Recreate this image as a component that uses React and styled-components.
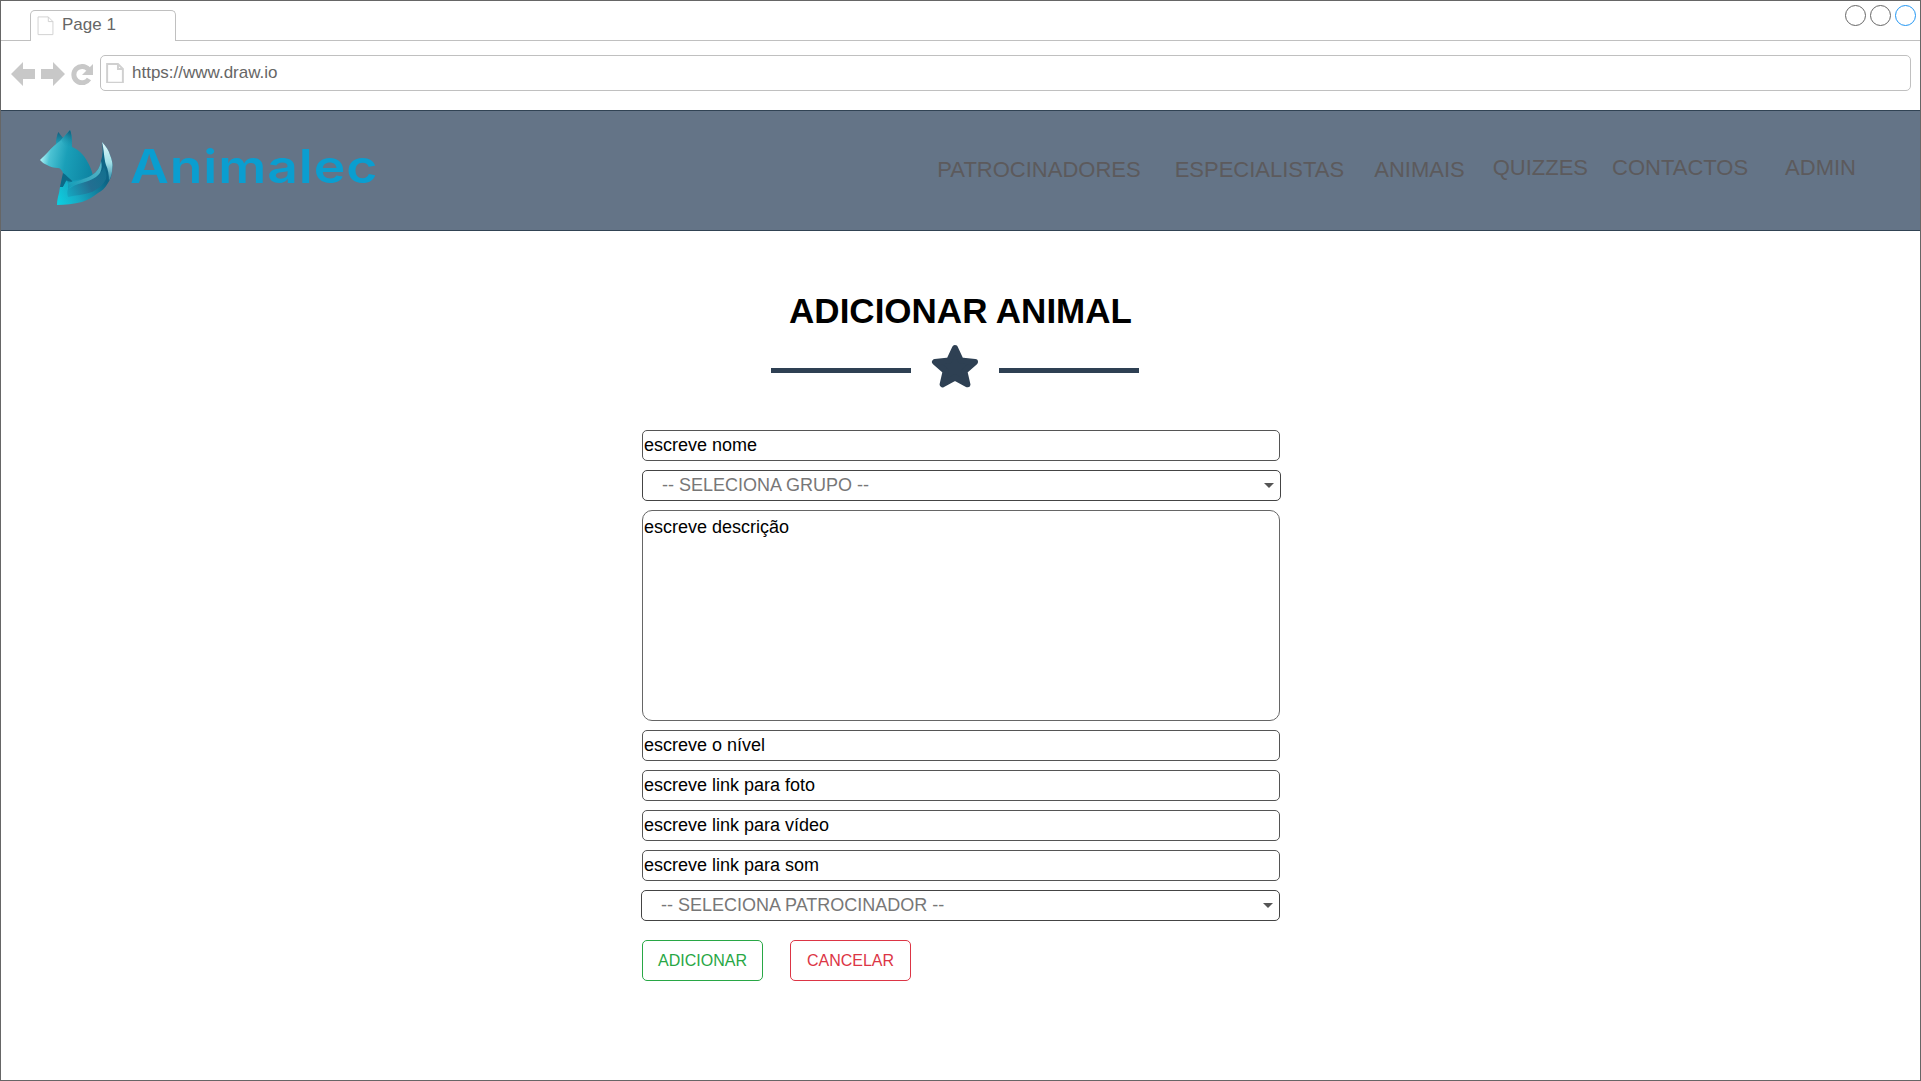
import React from 'react'
import styled, { createGlobalStyle } from 'styled-components'

const GlobalStyle = createGlobalStyle`
  html, body { margin: 0; padding: 0; background: #fff; }
  body { font-family: "Liberation Sans", Arial, sans-serif; }
  * { box-sizing: border-box; }
`

const navItems = [
  { label: 'PATROCINADORES', left: 0, lift: 0 },
  { label: 'ESPECIALISTAS', left: 34, lift: 0 },
  { label: 'ANIMAIS', left: 30, lift: 0 },
  { label: 'QUIZZES', left: 28, lift: 2 },
  { label: 'CONTACTOS', left: 24, lift: 2 },
  { label: 'ADMIN', left: 37, lift: 2 },
]

function FileIcon({ size = 20, stroke = '#d0d0d0', width = 1 }) {
  return (
    <svg width={size} height={size * 1.15} viewBox="0 0 18 21" fill="#fff" stroke={stroke} strokeWidth={width}>
      <path d="M1 1h11l5 5v14H1z" />
      <path d="M12 1v5h5" fill="none" />
    </svg>
  )
}

function BackArrow() {
  return (
    <svg width="24" height="24" viewBox="0 0 24 24" fill="#c8c8c8">
      <path d="M0 12 12 0v7h12v10H12v7z" />
    </svg>
  )
}

function ForwardArrow() {
  return (
    <svg width="24" height="24" viewBox="0 0 24 24" fill="#c8c8c8">
      <path d="M24 12 12 0v7H0v10h12v7z" />
    </svg>
  )
}

function ReloadIcon() {
  return (
    <svg width="22" height="22" viewBox="0 0 22 22" fill="none">
      <path d="M17.5 6.500A8.200 8.200 0 1 0 18 16" stroke="#c8c8c8" strokeWidth="5" />
      <path d="M22 1v11H11z" fill="#c8c8c8" />
    </svg>
  )
}

function FoxLogo() {
  return (
    <svg width="76" height="78" viewBox="0 0 76 78">
      <defs>
        <linearGradient id="foxBody" gradientUnits="userSpaceOnUse" x1="0" y1="30" x2="50" y2="40">
          <stop offset="0" stopColor="#b5f5f8" />
          <stop offset="0.18" stopColor="#4cc2d3" />
          <stop offset="0.5" stopColor="#1a9fb8" />
          <stop offset="1" stopColor="#0e86a4" />
        </linearGradient>
        <linearGradient id="foxEar" x1="0" y1="0" x2="0" y2="1">
          <stop offset="0" stopColor="#155f7e" />
          <stop offset="1" stopColor="#1b9fb9" />
        </linearGradient>
        <linearGradient id="foxEarShade" x1="0.7" y1="0" x2="0.4" y2="1">
          <stop offset="0" stopColor="#125a78" />
          <stop offset="1" stopColor="#1a9fb8" stopOpacity="0" />
        </linearGradient>
        <linearGradient id="foxTail" gradientUnits="userSpaceOnUse" x1="17" y1="76" x2="66" y2="52">
          <stop offset="0" stopColor="#0bd2e2" />
          <stop offset="0.4" stopColor="#18a9c3" />
          <stop offset="1" stopColor="#0d6485" />
        </linearGradient>
        <linearGradient id="foxBand" gradientUnits="userSpaceOnUse" x1="26" y1="64" x2="66" y2="44">
          <stop offset="0" stopColor="#14a8c2" />
          <stop offset="0.55" stopColor="#236f92" />
          <stop offset="1" stopColor="#14708f" />
        </linearGradient>
        <linearGradient id="foxStrip" gradientUnits="userSpaceOnUse" x1="28" y1="58" x2="62" y2="34">
          <stop offset="0" stopColor="#1497b3" />
          <stop offset="1" stopColor="#6fcbd8" />
        </linearGradient>
        <linearGradient id="foxTip" gradientUnits="userSpaceOnUse" x1="66" y1="54" x2="66" y2="14">
          <stop offset="0" stopColor="#1f7f9f" />
          <stop offset="0.5" stopColor="#9fdfe7" />
          <stop offset="1" stopColor="#dff8fa" />
        </linearGradient>
      </defs>
      <path d="M16 15C16 10 17 6 18.300 3L23 9L21 13Z" fill="url(#foxEar)" />
      <path d="M0 31C3 28 6 25 8 23C11 19 15 16 20 12L30 1C32 5 32 13 32 18C38 20 44 26 47 32C50 37 52 42 53 47L30 54L24 58L20 58C22 52 24 48 23 44C22 41 20 39 18 39C14 39 10 38 7 36C4 35 2 33 0 31Z" fill="url(#foxBody)" />
      <path d="M21 11L30 1C32 5 32 13 32 18L25 17Z" fill="url(#foxEarShade)" />
      <path d="M20 58C21 53 22 48 23 44C26 46 30 50 33 53L26 52L23 58Z" fill="#0b6a88" />
      <path d="M17 76C17 71 18 68 19 64L20 58L23 58L27 51L28 55L33 52C40 50 47 48 52 46C57 43 60 38 61 32C63 26 63 19 62 13C66 17 69 22 70 26C72 31 73 35 72.300 39C72 45 71 50 68 54C65 59 62 62 58 64C53 68 48 71 42 73C34 75 25 76 17 76Z" fill="url(#foxTail)" />
      <path d="M28 60C36 55 46 52 54 50C58 47 62 43 64 38C66 42 67 46 66 50C63 56 58 60 52 63C44 66 36 66 28 68C27 65 27 62 28 60Z" fill="url(#foxBand)" />
      <path d="M28 55C36 52 46 50 52 46C57 43 60 38 61 32C62 36 62 40 60 44C56 50 46 53 38 55C34 56 30 58 28 60Z" fill="url(#foxStrip)" opacity="0.8" />
      <path d="M62 13C66 17 69 22 70 26C72 31 73 35 72.300 39C72 45 71 48 69 52C69 46 68 40 66 36C64 30 64 20 62 13Z" fill="url(#foxTip)" />
    </svg>
  )
}

function StarIcon() {
  return (
    <svg width="48" height="46" viewBox="0 0 48 46">
      <path d="M24 4l5.800 12.500 14.200 1.500-10.600 9.300 3 13-12.400-6.800-12.400 6.800 3-13L4 18l14.200-1.500z" fill="#2e4053" stroke="#2e4053" strokeWidth="6" strokeLinejoin="round" />
    </svg>
  )
}

export default function App() {
  return (
    <Page>
      <GlobalStyle />
      <TabBar>
        <Tab>
          <FileIcon size={17} />
          <TabTitle>Page 1</TabTitle>
        </Tab>
        <WindowButtons>
          <WindowButton />
          <WindowButton />
          <WindowButton $active />
        </WindowButtons>
      </TabBar>
      <Toolbar>
        <ToolIcons>
          <BackArrow />
          <ForwardArrow />
          <ReloadIcon />
        </ToolIcons>
        <AddressBar>
          <FileIcon size={18} width={2} />
          <span>https://www.draw.io</span>
        </AddressBar>
      </Toolbar>
      <Header>
        <Brand>
          <FoxLogo />
          <BrandName>Animalec</BrandName>
        </Brand>
        <Nav>
          {navItems.map((item) => (
            <NavLink key={item.label} $left={item.left} $lift={item.lift}>{item.label}</NavLink>
          ))}
        </Nav>
      </Header>
      <Main>
        <Title>ADICIONAR ANIMAL</Title>
        <Divider>
          <DividerLine />
          <StarIcon />
          <DividerLine />
        </Divider>
        <Form>
          <Field>escreve nome</Field>
          <SelectField $group>
            <span>-- SELECIONA GRUPO --</span>
            <Caret />
          </SelectField>
          <TextArea>escreve descrição</TextArea>
          <Field>escreve o nível</Field>
          <Field>escreve link para foto</Field>
          <Field>escreve link para vídeo</Field>
          <Field>escreve link para som</Field>
          <SelectField $sponsor>
            <span>-- SELECIONA PATROCINADOR --</span>
            <Caret />
          </SelectField>
          <Actions>
            <ActionButton $color="#28a745">ADICIONAR</ActionButton>
            <ActionButton $color="#dc3545">CANCELAR</ActionButton>
          </Actions>
        </Form>
      </Main>
    </Page>
  )
}

const Page = styled.div`
  width: 1921px;
  height: 1081px;
  border: 1px solid #666;
  overflow: hidden;
  display: flex;
  flex-direction: column;
`
const TabBar = styled.div`
  height: 40px;
  padding-left: 29px;
  padding-right: 4px;
  border-bottom: 1px solid #c0c0c0;
  display: flex;
  align-items: flex-start;
  justify-content: space-between;
`
const Tab = styled.div`
  width: 146px;
  height: 31px;
  margin-top: 9px;
  padding-left: 6px;
  padding-top: 5px;
  display: flex;
  align-items: flex-start;
  gap: 8px;
  background: #fff;
  border: 1px solid #c0c0c0;
  border-bottom: none;
  border-radius: 5px 5px 0 0;
`
const TabTitle = styled.span`
  font-size: 17px;
  line-height: 18px;
  color: #666;
`
const WindowButtons = styled.div`
  display: flex;
  gap: 4px;
  padding-top: 4px;
`
const WindowButton = styled.div`
  width: 21px;
  height: 21px;
  border-radius: 50%;
  border: 1px solid ${(p) => (p.$active ? '#2196f3' : '#666')};
`
const Toolbar = styled.div`
  height: 69px;
  padding: 14px 9px 0 10px;
  display: flex;
  align-items: flex-start;
  gap: 7px;
`
const ToolIcons = styled.div`
  display: flex;
  align-items: center;
  gap: 6px;
  padding-top: 7px;
`
const AddressBar = styled.div`
  flex: 1;
  height: 36px;
  padding-left: 5px;
  display: flex;
  align-items: center;
  gap: 8px;
  border: 1px solid #c0c0c0;
  border-radius: 5px;
  font-size: 17px;
  color: #666;
`
const Header = styled.header`
  height: 121px;
  padding: 0 64px 0 39px;
  display: flex;
  justify-content: space-between;
  background: #647487;
  border-top: 1px solid #314354;
  border-bottom: 1px solid #314354;
`
const Brand = styled.div`
  display: flex;
  align-items: flex-start;
  gap: 14px;
  padding-top: 18px;
`
const BrandName = styled.div`
  font-family: Inter, "Liberation Sans", sans-serif;
  font-size: 46px;
  font-weight: 600;
  line-height: 56px;
  letter-spacing: 0.8px;
  color: #0a9ed0;
  padding-top: 9px;
  transform: scaleX(1.16);
  transform-origin: left center;
`
const Nav = styled.nav`
  display: flex;
  align-items: flex-start;
  padding-top: 44px;
`
const NavLink = styled.a`
  margin-left: ${(p) => p.$left}px;
  margin-top: ${(p) => 2 - p.$lift}px;
  font-size: 22px;
  line-height: 26px;
  color: #5c5a5c;
`
const Main = styled.main`
  display: flex;
  flex-direction: column;
  align-items: center;
  padding-top: 58px;
`
const Title = styled.h1`
  margin: 0;
  font-size: 35px;
  line-height: 44px;
  font-weight: 700;
  color: #000;
`
const Divider = styled.div`
  height: 46px;
  margin-top: 11px;
  padding-right: 11px;
  display: flex;
  align-items: center;
  gap: 20px;
`
const DividerLine = styled.div`
  width: 140px;
  height: 5px;
  margin-top: 7px;
  background: #2e4053;
`
const Form = styled.form`
  width: 638px;
  margin-top: 40px;
  margin-left: 1px;
  display: flex;
  flex-direction: column;
  gap: 9px;
`
const Field = styled.div`
  height: 31px;
  padding-left: 1px;
  display: flex;
  align-items: center;
  font-size: 18px;
  color: #000;
  border: 1px solid #555;
  border-radius: 5px;
`
const SelectField = styled.div`
  height: 31px;
  margin-left: ${(p) => (p.$sponsor ? '-1px' : '0')};
  margin-right: ${(p) => (p.$group ? '-1px' : '0')};
  padding: 0 6px 0 19px;
  display: flex;
  align-items: center;
  justify-content: space-between;
  font-size: 18px;
  color: #777;
  border: 1px solid #444;
  border-radius: 5px;
`
const Caret = styled.span`
  width: 0;
  height: 0;
  border-left: 5px solid transparent;
  border-right: 5px solid transparent;
  border-top: 5px solid #555;
`
const TextArea = styled.div`
  height: 211px;
  padding: 5px 1px;
  font-size: 18px;
  line-height: 22px;
  color: #000;
  border: 1px solid #666;
  border-radius: 10px;
`
const Actions = styled.div`
  margin-top: 10px;
  display: flex;
  gap: 27px;
`
const ActionButton = styled.div`
  width: 121px;
  height: 41px;
  display: flex;
  align-items: center;
  justify-content: center;
  font-size: 16px;
  color: ${(p) => p.$color};
  border: 1px solid ${(p) => p.$color};
  border-radius: 5px;
`
